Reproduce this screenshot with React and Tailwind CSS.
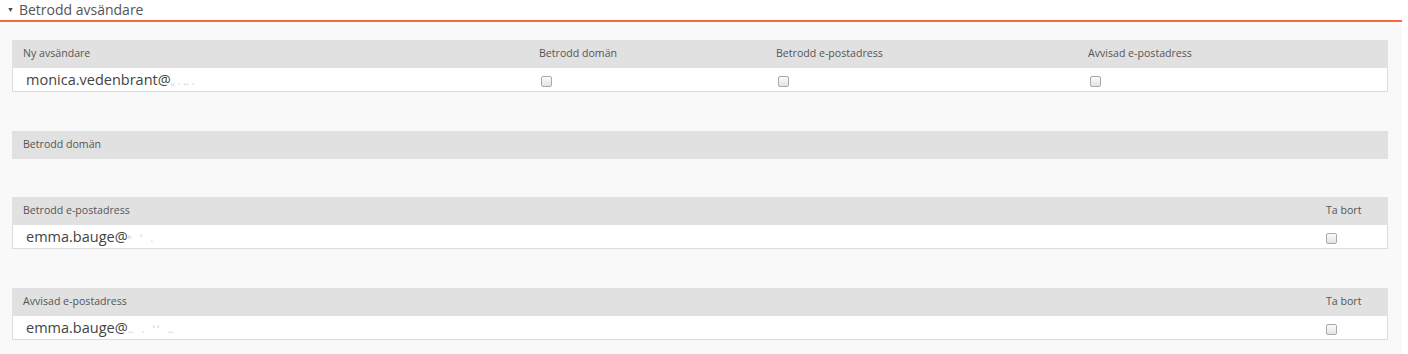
import React from "react";

const font = { fontFamily: '"Open Sans", "Noto Sans", sans-serif' };

function Box() {
  return (
    <span className="inline-block w-[11px] h-[11px] rounded-[2px] border border-[#a9a9a9] bg-gradient-to-b from-[#fbfbfb] to-[#e4e4e4]" />
  );
}

function Head({ children, cols }) {
  return (
    <div className={`grid ${cols} h-[28px] items-center bg-[#e1e1e1] text-[10.6px] text-[#555]`}>
      {children}
    </div>
  );
}

function Row({ children, cols }) {
  return (
    <div className={`grid ${cols} h-[24px] items-center bg-white border-x border-b border-[#dcdcdc] text-[14.5px] text-[#444]`}>
      {children}
    </div>
  );
}

function Email({ name, rest }) {
  return (
    <span className="pl-[13px] whitespace-nowrap">
      {name}
      <span className="text-[#c8c8c8] text-[10px] tracking-[3px]">{rest}</span>
    </span>
  );
}

function Cb() {
  return (
    <span className="pl-[12px] flex pt-[3px]">
      <Box />
    </span>
  );
}

export default function App() {
  const c1 = "grid-cols-[516px_237px_312px_1fr]";
  const c2 = "grid-cols-[1fr_73px]";
  return (
    <div className="w-[1408px] h-[354px] bg-white overflow-hidden" style={font}>
      <div className="w-[1402px] h-[22px] flex items-center border-b-2 border-[#f26a3e] bg-white">
        <span className="ml-[7px] mr-[5px] text-[7px] text-[#444]">▼</span>
        <span className="text-[14px] text-[#555] leading-none">Betrodd avsändare</span>
      </div>
      <div className="w-[1402px] h-[332px] bg-[#f9f9f9] pl-[12px] pr-[14px] pt-[18px] flex flex-col">
        <div>
          <Head cols={c1}>
            <span className="pl-[11px]">Ny avsändare</span>
            <span className="pl-[11px]">Betrodd domän</span>
            <span className="pl-[11px]">Betrodd e-postadress</span>
            <span className="pl-[11px]">Avvisad e-postadress</span>
          </Head>
          <Row cols={c1}>
            <Email name="monica.vedenbrant@" rest="ᵤ.‥." />
            <Cb />
            <Cb />
            <Cb />
          </Row>
        </div>
        <div className="mt-[39px]">
          <Head cols={c2}>
            <span className="pl-[11px]">Betrodd domän</span>
          </Head>
        </div>
        <div className="mt-[38px]">
          <Head cols={c2}>
            <span className="pl-[11px]">Betrodd e-postadress</span>
            <span className="pl-[11px]">Ta bort</span>
          </Head>
          <Row cols={c2}>
            <Email name="emma.bauge@" rest="ᵇ ˈ    ." />
            <Cb />
          </Row>
        </div>
        <div className="mt-[39px]">
          <Head cols={c2}>
            <span className="pl-[11px]">Avvisad e-postadress</span>
            <span className="pl-[11px]">Ta bort</span>
          </Head>
          <Row cols={c2}>
            <Email name="emma.bauge@" rest="‥ .  ˈˈ ‥" />
            <Cb />
          </Row>
        </div>
      </div>
    </div>
  );
}
